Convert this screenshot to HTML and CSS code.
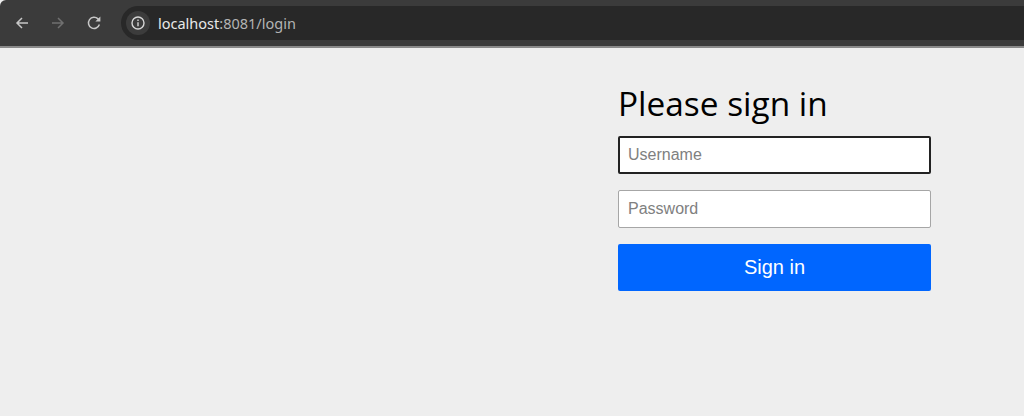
FILE: index.html
```html
<!DOCTYPE html>
<html lang="en">
<head>
    <meta charset="UTF-8">
    <meta name="viewport" content="width=device-width, initial-scale=1.0">
    <title>Please sign in</title>
    <link rel="stylesheet" href="styles.css">
</head>
<body>
    <!-- Browser toolbar -->
    <div class="toolbar">
        <div class="nav-buttons">
            <svg class="nav-icon" viewBox="0 0 16 16"><path d="M14 8H3M8 3L3 8l5 5"/></svg>
            <svg class="nav-icon nav-disabled" viewBox="0 0 16 16"><path d="M2 8h11M8 3l5 5-5 5"/></svg>
            <svg class="nav-icon" viewBox="0 0 16 16"><path d="M13.4 9.6A5.6 5.6 0 1 1 12 3.9L13.6 5.6"/><path class="nav-fill" d="M14.4 1.6v5H9.4z"/></svg>
        </div>
        <div class="omnibox">
            <div class="site-info">
                <svg class="info-icon" viewBox="0 0 16 16"><circle cx="8" cy="8" r="6"/><path d="M8 7.2v4M8 4.6v1.4"/></svg>
            </div>
            <div class="url">localhost<span class="url-path">:8081/login</span></div>
        </div>
    </div>

    <div class="page">
        <form class="signin-form">
            <h2 class="signin-heading">Please sign in</h2>
            <input class="form-control form-control-focus" type="text" placeholder="Username">
            <input class="form-control" type="password" placeholder="Password">
            <button class="signin-btn" type="button">Sign in</button>
        </form>
    </div>
</body>
</html>
```

FILE: styles.css
```css
body {
    margin: 0;
    height: 416px;
    overflow: hidden;
    display: flex;
    flex-direction: column;
    background-color: #eeeeee;
    font-family: "Liberation Sans", Arial, sans-serif;
}

/* Browser toolbar */
.toolbar {
    height: 48px;
    box-sizing: border-box;
    padding-top: 6px;
    display: flex;
    align-items: flex-start;
    background-color: #3b3b3b;
    border-bottom: 2px solid #8a8a8a;
    border-top-left-radius: 6px;
}
.nav-buttons {
    width: 121px;
    padding: 9px 0 0 14px;
    box-sizing: border-box;
    display: flex;
    gap: 20px;
}
.nav-icon {
    width: 16px;
    height: 16px;
    fill: none;
    stroke: #c7c7c7;
    stroke-width: 1.5;
}
.nav-disabled {
    stroke: #707070;
}
.nav-fill {
    fill: #c7c7c7;
    stroke: none;
}
.omnibox {
    flex: 1;
    height: 34px;
    display: flex;
    align-items: center;
    background-color: #282828;
    border-radius: 17px 0 0 17px;
}
.site-info {
    width: 24px;
    height: 24px;
    margin-left: 5px;
    display: flex;
    justify-content: center;
    align-items: center;
    background-color: #3c3c3c;
    border-radius: 50%;
}
.info-icon {
    width: 16px;
    height: 16px;
    fill: none;
    stroke: #d6d6d6;
    stroke-width: 1.4;
}
.url {
    margin-left: 8px;
    font-family: "Noto Sans", "Open Sans", sans-serif;
    font-size: 14.5px;
    color: #e8e8e8;
}
.url-path {
    color: #b4b4b4;
}

/* Login form */
.page {
    flex: 1;
    padding: 34px 93px 0 0;
    display: flex;
    justify-content: flex-end;
}
.signin-form {
    width: 313px;
    display: flex;
    flex-direction: column;
}
.signin-heading {
    margin: 0 0 12px 0;
    font-family: "Open Sans", "Noto Sans", sans-serif;
    font-size: 33.4px;
    font-weight: 400;
    line-height: 42px;
    color: #000000;
}
.form-control {
    height: 38px;
    margin-bottom: 16px;
    padding: 0 9px;
    box-sizing: border-box;
    font-family: inherit;
    font-size: 16px;
    background-color: #ffffff;
    border: 1px solid #a6a6a6;
    border-radius: 2px;
    outline: none;
}
.form-control::placeholder {
    color: #808080;
}
.form-control-focus {
    border: 2px solid #222222;
    padding: 0 8px;
}
.signin-btn {
    height: 47px;
    font-family: inherit;
    font-size: 20px;
    color: #ffffff;
    background-color: #0066ff;
    border: none;
    border-radius: 2px;
    cursor: pointer;
}
```
